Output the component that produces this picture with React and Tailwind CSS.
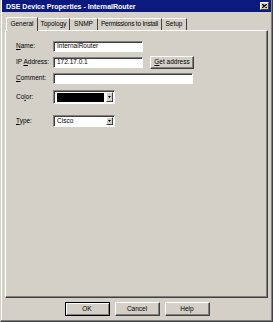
import React from 'react';

const font = { fontFamily: '"Liberation Sans", Arial, sans-serif' };

function Btn({ children, className = '', isDefault = false }) {
  return (
    <div
      className={`flex items-center justify-center bg-[#d4d0c8] text-[6.5px] text-black leading-none ${
        isDefault
          ? 'border border-black shadow-[inset_1px_1px_#ffffff,inset_-1px_-1px_#808080]'
          : 'border border-t-white border-l-white border-r-[#404040] border-b-[#404040] shadow-[inset_-1px_-1px_#808080]'
      } ${className}`}
    >
      {children}
    </div>
  );
}

function Field({ children, className = '' }) {
  return (
    <div
      className={`flex items-center bg-white border border-t-[#808080] border-l-[#808080] border-r-white border-b-white shadow-[inset_1px_1px_#404040] pl-[3px] text-[6.5px] leading-none text-black ${className}`}
    >
      {children}
    </div>
  );
}

function Select({ children, className = '' }) {
  return (
    <div
      className={`flex items-stretch bg-white border border-t-[#808080] border-l-[#808080] border-r-white border-b-white shadow-[inset_1px_1px_#404040] ${className}`}
    >
      <div className="flex-1 flex items-center pl-[3px] pt-[1px] text-[6.5px] leading-none text-black">{children}</div>
      <div className="w-[7px] my-[1px] mr-[1px] flex items-center justify-center bg-[#d4d0c8] border border-t-white border-l-white border-r-[#404040] border-b-[#404040]">
        <svg width="3" height="2" viewBox="0 0 3 2">
          <path d="M0 0h3L1.5 2z" fill="#000" />
        </svg>
      </div>
    </div>
  );
}

function Label({ children }) {
  return <div className="w-[37px] text-[6.5px] leading-none text-black">{children}</div>;
}

const tabs = [
  { name: 'Topology', w: 'w-[32px]' },
  { name: 'SNMP', w: 'w-[28px]' },
  { name: 'Permissions to Install', w: 'w-[64px] tracking-[-0.2px]' },
  { name: 'Setup', w: 'w-[25px]' },
];

export default function App() {
  return (
    <div style={font} className="w-[273px] h-[322px] bg-[#d4d0c8] flex flex-col border-r border-b border-r-[#404040] border-b-[#404040] border-l border-l-[#d4d0c8] shadow-[inset_-1px_-1px_#808080,inset_1px_0_#ffffff]">
      {/* title bar */}
      <div className="h-[12px] mx-[1px] bg-[#0c1a80] flex items-center justify-between pl-[4px] pr-[2px]">
        <span className="text-white font-bold text-[7px] leading-none">DSE Device Properties - InternalRouter</span>
        <div className="w-[9px] h-[8px] bg-[#d4d0c8] flex items-center justify-center border border-t-white border-l-white border-r-[#404040] border-b-[#404040]">
          <svg width="5" height="4" viewBox="0 0 5 4">
            <path d="M0 0L5 4M5 0L0 4" stroke="#000" strokeWidth="1.3" />
          </svg>
        </div>
      </div>

      {/* tabs */}
      <div className="flex items-end pl-[5px] mt-[4px] h-[14px]">
        <div className="h-[14px] w-[32px] -mb-[1px] z-10 relative bg-[#d4d0c8] border-t border-l border-r border-t-white border-l-white border-r-[#404040] rounded-tl-[2px] flex items-center justify-center text-[6.5px] leading-none text-black">
          General
        </div>
        {tabs.map((t) => (
          <div
            key={t.name}
            className={`h-[12px] ${t.w} border-t border-r border-t-white border-r-[#404040] flex items-center justify-center text-[6.5px] leading-none text-black whitespace-nowrap`}
          >
            {t.name}
          </div>
        ))}
      </div>

      {/* panel */}
      <div className="mx-[4px] h-[268px] border border-t-white border-l-white border-r-[#404040] border-b-[#404040] shadow-[inset_-1px_-1px_#808080] pl-[10px] pt-[10px] flex flex-col">
        <div className="flex items-center h-[11px]">
          <Label><u>N</u>ame:</Label>
          <Field className="w-[90px] h-[11px]">InternalRouter</Field>
        </div>
        <div className="flex items-center h-[13px] mt-[4px]">
          <Label>IP <u>A</u>ddress:</Label>
          <Field className="w-[90px] h-[11px]">172.17.0.1</Field>
          <Btn className="ml-[7px] w-[44px] h-[13px]"><u>G</u>et address</Btn>
        </div>
        <div className="flex items-center h-[11px] mt-[4px]">
          <Label><u>C</u>omment:</Label>
          <Field className="w-[140px] h-[11px]" />
        </div>
        <div className="flex items-center h-[14px] mt-[6px]">
          <Label>Co<u>l</u>or:</Label>
          <Select className="w-[62px] h-[14px]">
            <div className="w-[47px] h-[9px] bg-black" />
          </Select>
        </div>
        <div className="flex items-center h-[12px] mt-[11px]">
          <Label><u>T</u>ype:</Label>
          <Select className="w-[62px] h-[12px]">Cisco</Select>
        </div>
      </div>

      {/* buttons */}
      <div className="flex justify-center gap-[5px] mt-[4px] pl-[1px]">
        <Btn isDefault className="w-[45px] h-[14px]">OK</Btn>
        <Btn className="w-[45px] h-[14px]">Cancel</Btn>
        <Btn className="w-[45px] h-[14px]">Help</Btn>
      </div>
    </div>
  );
}
